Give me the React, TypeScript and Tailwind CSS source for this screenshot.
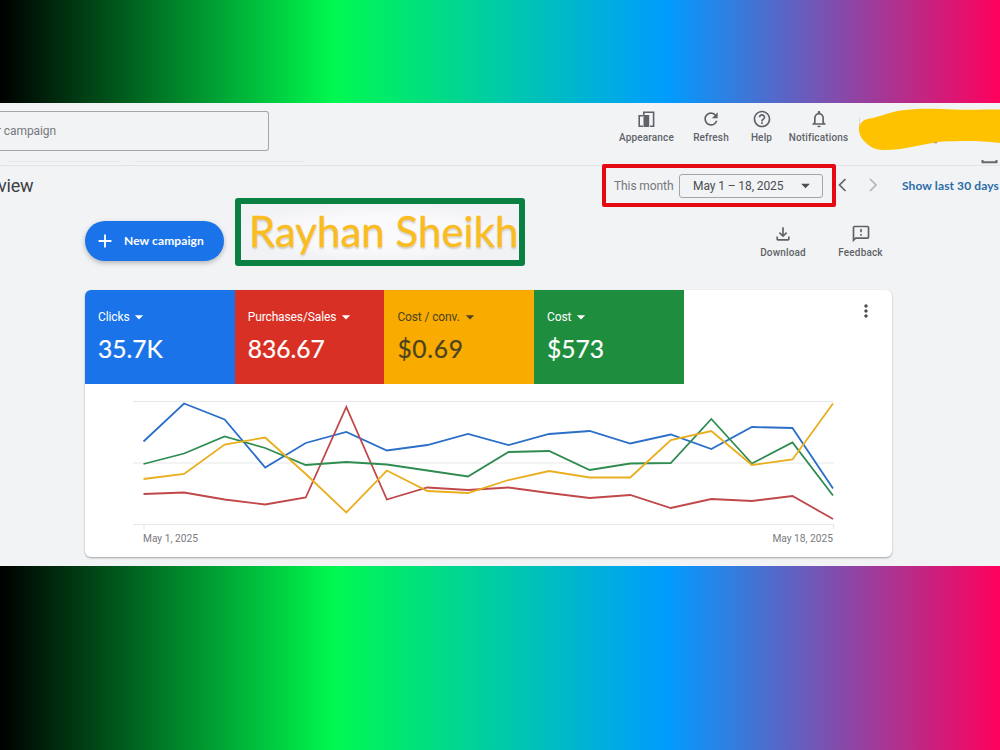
import type { ReactNode } from "react";
import {
  MdAdd,
  MdArrowDropDown,
  MdHelpOutline,
  MdMoreVert,
  MdNotificationsNone,
  MdOutlineFeedback,
  MdOutlineFileDownload,
  MdRefresh,
} from "react-icons/md";
import clsx from "clsx";

const metrics = [
  { label: "Clicks", value: "35.7K", className: "bg-[#1a73e8] text-white" },
  { label: "Purchases/Sales", value: "836.67", className: "bg-[#d93025] text-white" },
  {
    label: "Cost / conv.",
    value: "$0.69",
    className: "bg-[#f9ab00] text-[#4b4321]",
    valueClassName: "tracking-[0.7px]",
  },
  { label: "Cost", value: "$573", className: "bg-[#1e8e3e] text-white" },
];

// y values are measured down from the top of the chart
const series = [
  {
    color: "#2b6fc9",
    points: [51.5, 13.5, 29.5, 77.5, 53, 42, 60.5, 55, 44, 55, 44, 41, 53.5, 44.5, 59, 37, 38, 98.5],
  },
  {
    color: "#c0474a",
    points: [104, 102.5, 109.5, 114.5, 107.5, 17, 109.5, 97.5, 100, 97.5, 103, 108, 105, 118, 109, 111, 106, 129],
  },
  {
    color: "#2f8c50",
    points: [74, 63.5, 46.5, 58, 75, 72, 74.5, 80.5, 86.5, 62, 61, 80, 73.5, 73, 29, 73.5, 52.5, 105.5],
  },
  {
    color: "#e8ae1e",
    points: [89, 84, 54.5, 47.5, 84, 122.5, 80.5, 101, 103, 90, 81, 87.5, 87.5, 50, 41, 75, 69.5, 13.5],
  },
];

const AppearanceIcon = () => (
  <svg width="17" height="17" viewBox="0 0 17 17" fill="none">
    <path d="M5 4.7H1.2v10.6H5" stroke="currentColor" strokeWidth="1.6" />
    <path d="M5.8 4.7V1.3H15.6V15.3H12" stroke="currentColor" strokeWidth="1.6" />
    <path d="M5.5 4h5.700v12H5.5z" fill="currentColor" />
  </svg>
);

const IconLabel = ({
  icon,
  label,
  className,
}: {
  icon: ReactNode;
  label: string;
  className?: string;
}) => (
  <div className={clsx("flex flex-col items-center gap-[3px] text-[#5f6368]", className)}>
    <div className="h-5 flex items-center justify-center">{icon}</div>
    <span className="text-[10px] leading-3 font-medium tracking-[0.15px] whitespace-nowrap">
      {label}
    </span>
  </div>
);

const Header = () => (
  <header className="relative h-[63px] shrink-0 border-b border-[#e1e3e6] flex items-start">
    <div className="mt-[8px] w-[269px] h-[40px] border border-l-0 border-[#a4a6aa] rounded-r-[3px] flex items-center">
      <span className="-ml-[3px] text-[12px] tracking-[-0.1px] text-[#77797d] whitespace-nowrap">
        r campaign
      </span>
    </div>
    <div className="ml-[345px] mt-[6px] flex">
      <IconLabel icon={<AppearanceIcon />} label="Appearance" className="w-[65px]" />
      <IconLabel icon={<MdRefresh size={20} />} label="Refresh" className="w-[64px]" />
      <IconLabel icon={<MdHelpOutline size={20} />} label="Help" className="w-[37px]" />
      <IconLabel icon={<MdNotificationsNone size={20} />} label="Notifications" className="w-[77px]" />
    </div>
    <svg className="absolute right-0 top-0" width="145" height="62" viewBox="0 0 145 62">
      <path d="M79 39.5h3M108 37.2h16" stroke="#8d8f80" strokeWidth="1.5" />
      <path d="M4.500 15v10" stroke="#d5d7da" />
      <path
        d="M4 28C3 20 8 16 18 15C29 12 38 8 50 7C67 5 83 5.500 98 6.500C115 7 130 6.500 145 6.500V40C124 37.500 108 38 88 38.500C71 40 51 47 29 47C18 47 13 42 9 38Q5 34 4 28Z"
        fill="#fec200"
      />
      <path d="M127.500 57v2.200h14V57" stroke="#65686c" strokeWidth="2" fill="none" />
    </svg>
    <div className="absolute left-2 top-[58px] w-[113px] h-px bg-[#e9eaed]" />
    <div className="absolute left-[134px] top-[58px] w-[171px] h-px bg-[#e9eaed]" />
  </header>
);

const DateBar = () => (
  <div className="relative h-[41px] -mt-[1px] shrink-0 flex items-center">
    <h1 className="-ml-[2px] w-[604px] text-[18px] tracking-[-0.2px] text-[#3c4043]">view</h1>
    <div className="w-[234px] h-[43px] border-4 border-[#e60a12] rounded-[2px] flex items-center pl-2">
      <span className="w-[65px] text-[12px] tracking-[-0.1px] text-[#75777b] whitespace-nowrap">
        This month
      </span>
      <div className="w-[144px] h-6 border border-[#a3a5a8] rounded-[3px] flex items-center justify-between pl-[13px] pr-[6px] text-[#4a4d51]">
        <span className="text-[12px] tracking-[-0.1px] whitespace-nowrap">May 1 – 18, 2025</span>
        <MdArrowDropDown size={21} />
      </div>
    </div>
    <svg width="42" height="16" viewBox="0 0 42 16" fill="none" className="ml-[2px]" strokeWidth="1.7">
      <path d="M7.5 1L1.5 7L7.5 13" stroke="#5f6368" />
      <path d="M32 1L38 7L32 13" stroke="#b3b5b8" />
    </svg>
    <span className="ml-[22px] font-['Lato'] text-[12px] font-bold tracking-[0.1px] text-[#2a6da8] whitespace-nowrap">
      Show last 30 days
    </span>
  </div>
);

const ActionBar = () => (
  <div className="h-[84px] shrink-0 pl-[85px] flex items-start">
    <button className="mt-[15px] w-[139px] h-10 rounded-full bg-[#1a73e8] text-white flex items-center pl-[9px] shadow-[0_2px_5px_rgba(60,64,67,0.35)]">
      <MdAdd size={22} />
      <span className="ml-[8px] font-['Lato'] text-[12px] font-bold tracking-[0.1px] whitespace-nowrap">
        New campaign
      </span>
    </button>
    <div className="-mt-[8px] ml-[11px] w-[290px] h-[68px] border-[6px] border-[#0a8043] rounded-[3px] bg-[radial-gradient(ellipse,#fafafc_40%,#f1f2f5_75%)] pl-2 flex items-center">
      <span className="-mt-[2px] font-['Lato'] text-[42px] leading-[56px] text-[#fbbc1f] whitespace-nowrap [-webkit-text-stroke:0.3px_#fbbc1f] [text-shadow:0_2px_2px_rgba(90,80,50,0.25)]">
        Rayhan Sheikh
      </span>
    </div>
    <div className="ml-[219px] mt-[18px] flex">
      <IconLabel icon={<MdOutlineFileDownload size={20} />} label="Download" className="w-[78px]" />
      <IconLabel icon={<MdOutlineFeedback size={20} />} label="Feedback" className="w-[77px]" />
    </div>
  </div>
);

const Chart = () => (
  <div className="w-[808px] pt-[6px]">
    <svg width="808" height="140" viewBox="0 0 808 140" fill="none" className="block">
      <path d="M48 11.5H749M48 73H749M48 134.5H749" stroke="#e6e7e9" />
      <path d="M59 135v4M748.5 135v4" stroke="#e6e7e9" />
      {series.map((line) => (
        <polyline
          key={line.color}
          points={line.points.map((y, i) => `${58.5 + i * 40.56},${y}`).join(" ")}
          stroke={line.color}
          strokeWidth="1.8"
        />
      ))}
    </svg>
    <div className="flex justify-between pl-[58px] pr-[60px] pt-[3px] text-[10.2px] leading-3 text-[#77797d]">
      <span>May 1, 2025</span>
      <span>May 18, 2025</span>
    </div>
  </div>
);

const OverviewCard = () => (
  <section className="ml-[85px] w-[807px] h-[267px] shrink-0 bg-white rounded-[6px] overflow-hidden shadow-[0_1px_2px_rgba(60,64,67,0.45)]">
    <div className="flex h-[94px]">
      {metrics.map((metric) => (
        <div key={metric.label} className={clsx("w-[149.7px] pl-[13px] pt-[19px]", metric.className)}>
          <div className="h-4 flex items-center">
            <span className="text-[12px] leading-4 tracking-[-0.12px] whitespace-nowrap">
              {metric.label}
            </span>
            <MdArrowDropDown size={20} />
          </div>
          <div
            className={clsx(
              "mt-2 font-['Lato'] text-[24.6px] leading-8 [-webkit-text-stroke:0.2px_currentColor]",
              metric.valueClassName,
            )}
          >
            {metric.value}
          </div>
        </div>
      ))}
      <MdMoreVert size={20} className="ml-[172px] mt-[11px] text-[#4a4d51]" />
    </div>
    <Chart />
  </section>
);

export default function App() {
  return (
    <div className="w-[1000px] h-[750px] py-[103px] overflow-hidden bg-[linear-gradient(90deg,#000000_0%,#00f94f_33.4%,#009cff_66.7%,#ff005c_100%)] font-['Roboto',sans-serif]">
      <main className="h-[463px] overflow-hidden bg-[#f1f3f5] flex flex-col">
        <Header />
        <DateBar />
        <ActionBar />
        <OverviewCard />
      </main>
    </div>
  );
}
